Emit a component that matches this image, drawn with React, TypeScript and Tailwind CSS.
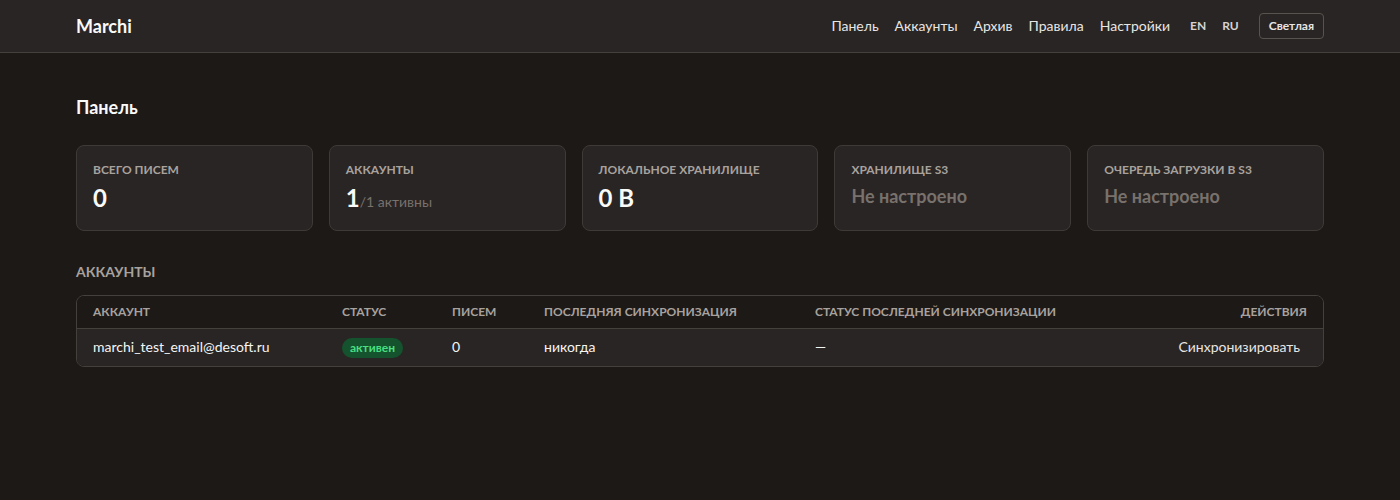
const font = { fontFamily: '"Segoe UI", Lato, "Liberation Sans", sans-serif' };

type Stat = { label: string; value: string; sub?: string; muted?: boolean };

const stats: Stat[] = [
  { label: 'Всего писем', value: '0' },
  { label: 'Аккаунты', value: '1', sub: '/1 активны' },
  { label: 'Локальное хранилище', value: '0 B' },
  { label: 'Хранилище S3', value: 'Не настроено', muted: true },
  { label: 'Очередь загрузки в S3', value: 'Не настроено', muted: true },
];

function StatCard({ label, value, sub, muted }: Stat) {
  return (
    <div className="h-[86px] rounded-lg border border-[#3f3a37] bg-[#292524] px-4 pt-4">
      <div className="h-4 text-xs font-bold uppercase leading-4 text-[#a8a29e]">{label}</div>
      {muted ? (
        <div className="mt-1 h-7 text-lg font-bold leading-7 text-[#78716c]">{value}</div>
      ) : (
        <div className="mt-1 flex h-8 items-baseline">
          <span className="text-2xl font-bold leading-8 text-[#fafaf9]">{value}</span>
          {sub && <span className="text-sm leading-5 text-[#78716c]">{sub}</span>}
        </div>
      )}
    </div>
  );
}

export default function App() {
  return (
    <div className="min-h-[500px] bg-[#1c1917] text-[#e7e5e4]" style={font}>
      <header className="h-[53px] border-b border-[#44403c] bg-[#292524]">
        <div className="mx-auto flex h-full max-w-7xl items-center justify-between px-4">
          <div className="text-lg font-bold text-[#fafaf9]">Marchi</div>
          <div className="flex items-center gap-5">
            <nav className="flex items-center gap-4 text-sm text-[#e7e5e4]">
              <a>Панель</a>
              <a>Аккаунты</a>
              <a>Архив</a>
              <a>Правила</a>
              <a>Настройки</a>
            </nav>
            <div className="flex items-center gap-4 text-xs font-bold text-[#d6d3d1]">
              <span>EN</span>
              <span>RU</span>
            </div>
            <button className="h-[26px] rounded border border-[#57534e] px-[9px] text-xs font-bold text-[#e7e5e4]">
              Светлая
            </button>
          </div>
        </div>
      </header>

      <main className="mx-auto max-w-7xl px-4 pt-[40px]">
        <h1 className="text-lg font-bold leading-7 text-[#fafaf9]">Панель</h1>

        <div className="mt-[24px] grid grid-cols-5 gap-4">
          {stats.map((s) => (
            <StatCard key={s.label} {...s} />
          ))}
        </div>

        <h2 className="mt-[31px] text-sm font-bold uppercase leading-5 text-[#a8a29e]">Аккаунты</h2>

        <div className="mt-[13px] overflow-hidden rounded-lg border border-[#44403c]">
          <table className="w-full table-fixed text-left">
            <colgroup>
              <col className="w-[249px]" />
              <col className="w-[110px]" />
              <col className="w-[92px]" />
              <col className="w-[271px]" />
              <col />
              <col className="w-[200px]" />
            </colgroup>
            <thead className="bg-[#1c1917] text-xs uppercase text-[#a8a29e]">
              <tr className="h-[32px] border-b border-[#44403c]">
                <th className="px-4 font-bold">Аккаунт</th>
                <th className="px-4 font-bold">Статус</th>
                <th className="px-4 font-bold">Писем</th>
                <th className="px-4 font-bold">Последняя синхронизация</th>
                <th className="px-4 font-bold">Статус последней синхронизации</th>
                <th className="px-4 text-right font-bold">Действия</th>
              </tr>
            </thead>
            <tbody className="bg-[#292524] text-sm text-[#f5f5f4]">
              <tr className="h-[38px]">
                <td className="px-4">marchi_test_email@desoft.ru</td>
                <td className="px-4">
                  <span className="inline-flex h-5 items-center rounded-full bg-[#14532d] px-2 text-xs font-bold text-[#4ade80]">
                    активен
                  </span>
                </td>
                <td className="px-4">0</td>
                <td className="px-4">никогда</td>
                <td className="px-4">—</td>
                <td className="px-4 text-right">
                  <button className="pr-[7px] text-sm text-[#e7e5e4]">Синхронизировать</button>
                </td>
              </tr>
            </tbody>
          </table>
        </div>
      </main>
    </div>
  );
}
